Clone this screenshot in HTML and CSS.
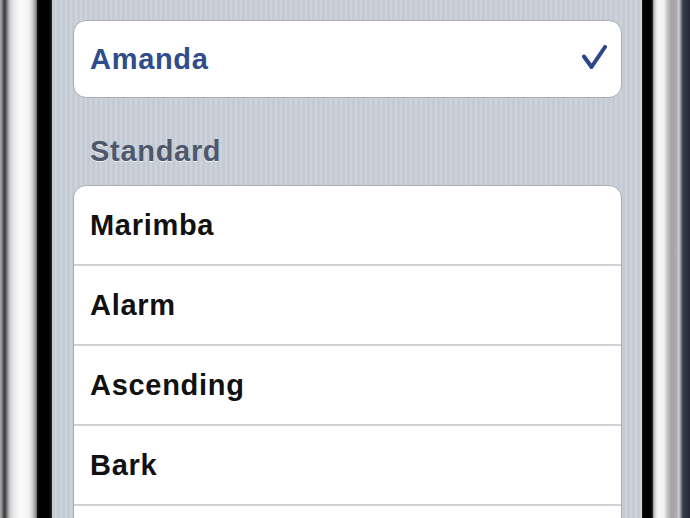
FILE: index.html
```html
<!DOCTYPE html>
<html>
<head>
<meta charset="utf-8">
<link rel="stylesheet" href="styles.css">
</head>
<body>
<div class="device">
  <div class="bezel-left"></div>
  <div class="black-left"></div>
  <div class="screen">
    <div class="card selected">
      <span class="name">Amanda</span>
      <svg class="check" width="26" height="26" viewBox="0 0 26 26">
        <path d="M3 11.5 L10.5 22 L24 2" fill="none" stroke="#2b468a" stroke-width="4" stroke-linecap="round" stroke-linejoin="round"/>
      </svg>
    </div>
    <div class="section-title">Standard</div>
    <div class="card list">
      <div class="row">Marimba</div>
      <div class="row">Alarm</div>
      <div class="row">Ascending</div>
      <div class="row">Bark</div>
      <div class="row"></div>
    </div>
  </div>
  <div class="black-right"></div>
  <div class="bezel-right"></div>
</div>
</body>
</html>
```

FILE: styles.css
```css
html, body {
  margin: 0;
  padding: 0;
  width: 690px;
  height: 518px;
  overflow: hidden;
}
body {
  font-family: "Liberation Sans", Arial, sans-serif;
}
.device {
  display: flex;
  width: 690px;
  height: 518px;
}
.bezel-left {
  width: 37px;
  flex: none;
  background: linear-gradient(90deg,
    #a8a8aa 0px, #8a8a8c 2px, #3a3a3c 4px, #5a5a5c 6px, #9a9a9c 8px,
    #cdcdd0 10px, #e9e9ea 14px, #fafafa 20px, #f5f5f6 28px,
    #d6d6d9 32px, #a2a2a6 35px, #6a6a6e 37px);
}
.black-left {
  width: 15px;
  flex: none;
  background: linear-gradient(90deg, #111 0, #000 3px, #000 12px, #2a2a2c 15px);
}
.screen {
  flex: 1;
  padding: 20px 20px 0 21px;
  background-color: #c7ced6;
  background-image: repeating-linear-gradient(90deg,
    #c4cbd3 0px, #c4cbd3 3px, #ccd3da 3px, #ccd3da 5px);
  overflow: hidden;
}
.card {
  background: #fff;
  border: 1px solid #a9adb3;
  border-radius: 13px;
  overflow: hidden;
}
.selected {
  height: 78px;
  box-sizing: border-box;
  display: flex;
  align-items: center;
  justify-content: space-between;
  padding: 0 14px 0 16px;
}
.name {
  color: #2f4c8b;
  font-weight: bold;
  font-size: 29px;
  letter-spacing: 0.7px;
}
.check {
  display: block;
  margin-top: -2px;
}
.section-title {
  margin: 38px 0 0 17px;
  height: 30px;
  line-height: 30px;
  font-size: 29px;
  font-weight: bold;
  letter-spacing: 0.7px;
  color: #4e586d;
  text-shadow: 0 1px 0 rgba(255,255,255,0.7);
}
.list {
  margin-top: 19px;
  border-bottom-left-radius: 0;
  border-bottom-right-radius: 0;
}
.row {
  height: 80px;
  box-sizing: border-box;
  border-bottom: 2px solid #d0d1d4;
  display: flex;
  align-items: center;
  padding-left: 16px;
  font-size: 29px;
  font-weight: bold;
  letter-spacing: 0.7px;
  color: #111;
}
.black-right {
  width: 11px;
  flex: none;
  background: linear-gradient(90deg, #1a1a1a 0, #000 2px, #000 9px, #333 11px);
}
.bezel-right {
  width: 37px;
  flex: none;
  background: linear-gradient(90deg,
    #9a9a9e 0px, #e6e6e8 3px, #f8f8f8 6px, #f2f2f3 11px,
    #c9c9cc 14px, #a4a5a9 18px, #a8a9ad 23px, #cfd0d3 26px,
    #7f828b 28px, #363b4a 30px, #262b3a 37px);
}
```
